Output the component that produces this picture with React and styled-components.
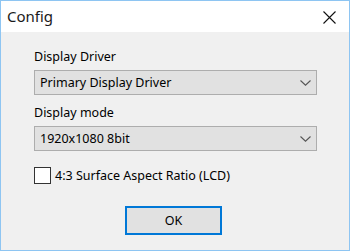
import React from "react";
import styled, { createGlobalStyle } from "styled-components";

const Global = createGlobalStyle`
  html, body { margin: 0; padding: 0; background: #f0f0f0; }
  * { box-sizing: border-box; }
`;

const Window = styled.div`
  width: 350px;
  height: 251px;
  border: 1px solid #8ec5f2;
  background: #f0f0f0;
  display: flex;
  flex-direction: column;
  font-family: "Noto Sans", "Open Sans", sans-serif;
  color: #000;
`;

const TitleBar = styled.div`
  height: 31px;
  background: #fff;
  display: flex;
  align-items: center;
  justify-content: space-between;
  padding: 0 13px 0 6px;
  flex-shrink: 0;
`;

const Title = styled.span`
  font-size: 15px;
  color: #1a1a1a;
  margin-top: -1px;
`;

const Close = styled.div`
  width: 13px;
  height: 13px;
  display: flex;
  margin-top: 1px;
`;

const Body = styled.div`
  flex: 1;
  display: flex;
  flex-direction: column;
  padding: 16px 0 0 33px;
`;

const Label = styled.div`
  font-size: 12.5px;
  line-height: 17px;
  margin-bottom: 5px;
`;

const Select = styled.div`
  width: 283px;
  height: 25px;
  background: #e1e1e1;
  border: 1px solid #adadad;
  display: flex;
  align-items: center;
  justify-content: space-between;
  padding: 0 5px 0 5px;
  font-size: 12.5px;
  margin-bottom: ${(p) => p.$mb || 0}px;
`;

const CheckRow = styled.label`
  display: flex;
  align-items: center;
  gap: 4px;
  font-size: 12.5px;
  margin-top: ${(p) => p.$mt}px;
`;

const Box = styled.span`
  width: 17px;
  height: 17px;
  border: 1px solid #333;
  background: #fff;
  display: inline-block;
`;

const ButtonRow = styled.div`
  display: flex;
  padding-left: 91px;
  margin-top: 22px;
`;

const Button = styled.div`
  width: 97px;
  height: 29px;
  border: 2px solid #0078d7;
  background: #e1e1e1;
  display: flex;
  align-items: center;
  justify-content: center;
  font-size: 12.5px;
`;

const Chevron = () => (
  <svg width="11" height="6" viewBox="0 0 11 6">
    <path d="M0.5 0.5 L5.5 5.2 L10.5 0.5" fill="none" stroke="#555" strokeWidth="1.1" />
  </svg>
);

export default function App() {
  return (
    <>
      <Global />
      <Window>
        <TitleBar>
          <Title>Config</Title>
          <Close>
            <svg width="13" height="13" viewBox="0 0 13 13">
              <path d="M0.5 0.5 L12.5 12.5 M12.5 0.5 L0.5 12.5" stroke="#111" strokeWidth="1.1" />
            </svg>
          </Close>
        </TitleBar>
        <Body>
          <Label>Display Driver</Label>
          <Select $mb={9}>
            <span>Primary Display Driver</span>
            <Chevron />
          </Select>
          <Label>Display mode</Label>
          <Select>
            <span>1920x1080 8bit</span>
            <Chevron />
          </Select>
          <CheckRow $mt={16}>
            <Box />
            <span>4:3 Surface Aspect Ratio (LCD)</span>
          </CheckRow>
          <ButtonRow>
            <Button>OK</Button>
          </ButtonRow>
        </Body>
      </Window>
    </>
  );
}
